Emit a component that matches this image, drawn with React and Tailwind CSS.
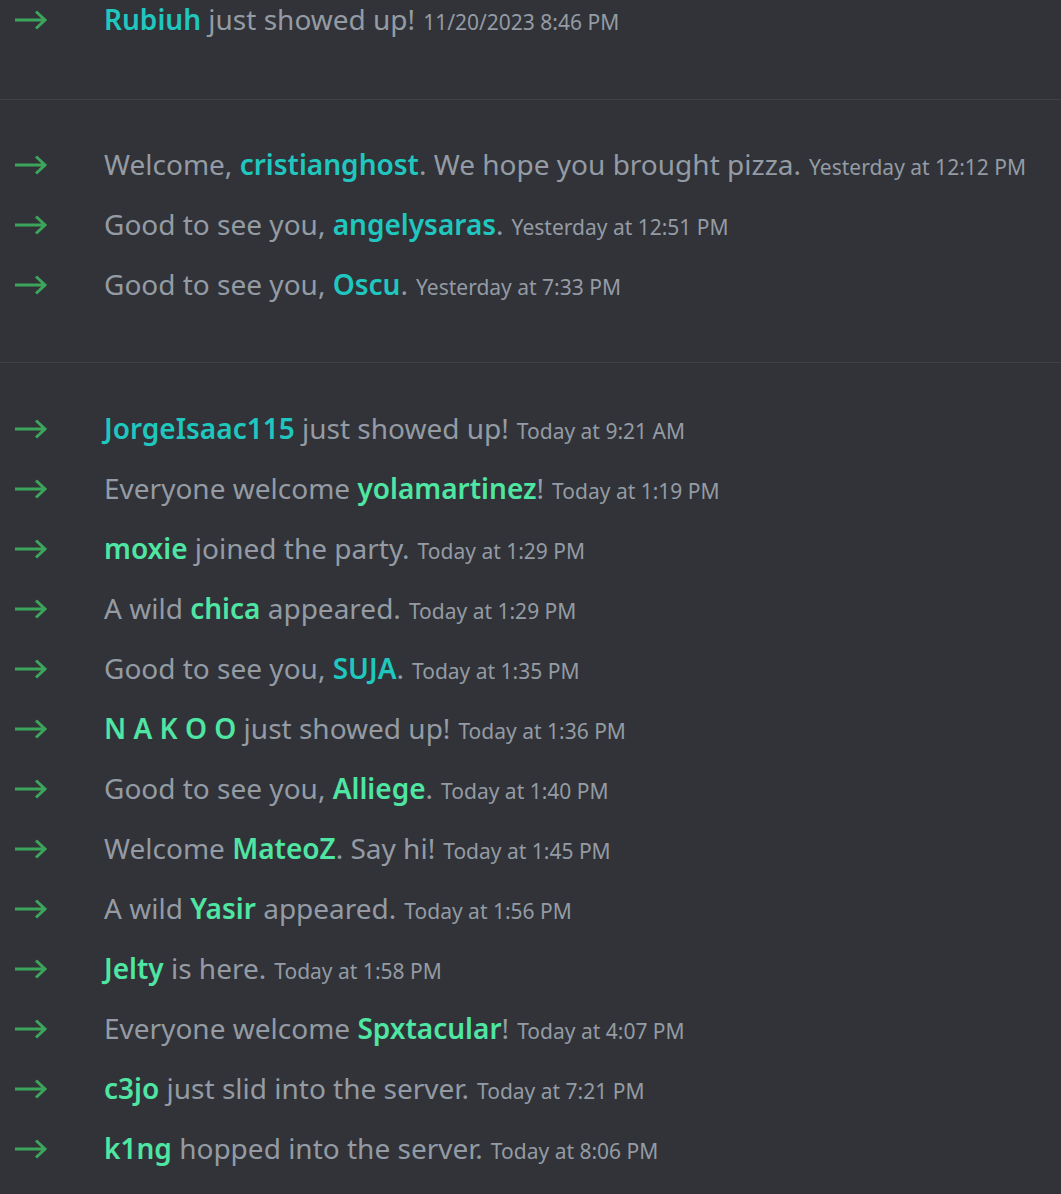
import React from "react";

const TEAL = "text-[#1fc7bf]";
const MINT = "text-[#4fe5a3]";

const Arrow = () => (
  <svg width="34" height="26" viewBox="0 0 34 26" className="shrink-0" fill="none">
    <path d="M1 13 H31 M22 4.5 L31 13 L22 21.5" stroke="#3ba55c" strokeWidth="3" strokeLinecap="butt" strokeLinejoin="miter" />
  </svg>
);

function Row({ before, name, after, time, color, tight }) {
  return (
    <div className={`flex items-center ${tight ? "h-[40px]" : "h-[60px]"}`}>
      <div className="w-[104px] pl-[14px] flex items-center shrink-0">
        <Arrow />
      </div>
      <div className="whitespace-nowrap text-[28px] leading-[36px] text-[#949ba4]">
        {before}
        <span className={`font-semibold ${color}`}>{name}</span>
        {after}
        <span className="ml-[8px] text-[21px] text-[#949ba4]">{time}</span>
      </div>
    </div>
  );
}

const g2 = [
  { before: "Welcome, ", name: "cristianghost", after: ". We hope you brought pizza.", time: "Yesterday at 12:12 PM", color: TEAL },
  { before: "Good to see you, ", name: "angelysaras", after: ".", time: "Yesterday at 12:51 PM", color: TEAL },
  { before: "Good to see you, ", name: "Oscu", after: ".", time: "Yesterday at 7:33 PM", color: TEAL },
];

const g3 = [
  { name: "JorgeIsaac115", after: " just showed up!", time: "Today at 9:21 AM", color: TEAL },
  { before: "Everyone welcome ", name: "yolamartinez", after: "!", time: "Today at 1:19 PM", color: MINT },
  { name: "moxie", after: " joined the party.", time: "Today at 1:29 PM", color: MINT },
  { before: "A wild ", name: "chica", after: " appeared.", time: "Today at 1:29 PM", color: MINT },
  { before: "Good to see you, ", name: "SUJA", after: ".", time: "Today at 1:35 PM", color: TEAL },
  { name: "N A K O O", after: " just showed up!", time: "Today at 1:36 PM", color: MINT },
  { before: "Good to see you, ", name: "Alliege", after: ".", time: "Today at 1:40 PM", color: MINT },
  { before: "Welcome ", name: "MateoZ", after: ". Say hi!", time: "Today at 1:45 PM", color: MINT },
  { before: "A wild ", name: "Yasir", after: " appeared.", time: "Today at 1:56 PM", color: MINT },
  { name: "Jelty", after: " is here.", time: "Today at 1:58 PM", color: MINT },
  { before: "Everyone welcome ", name: "Spxtacular", after: "!", time: "Today at 4:07 PM", color: MINT },
  { name: "c3jo", after: " just slid into the server.", time: "Today at 7:21 PM", color: MINT },
  { name: "k1ng", after: " hopped into the server.", time: "Today at 8:06 PM", color: MINT },
];

export default function App() {
  return (
    <div
      className="w-[1061px] h-[1194px] overflow-hidden bg-[#313338]"
      style={{ fontFamily: '"Noto Sans", "Open Sans", sans-serif' }}
    >
      <Row tight name="Rubiuh" after=" just showed up!" time="11/20/2023 8:46 PM" color={TEAL} />
      <div className="h-[59px]" />
      <div className="h-px bg-[#3f4147]" />
      <div className="pt-[35px] pb-[47px]">
        {g2.map((r, i) => <Row key={i} {...r} />)}
      </div>
      <div className="h-px bg-[#3f4147]" />
      <div className="pt-[36px]">
        {g3.map((r, i) => <Row key={i} {...r} />)}
      </div>
    </div>
  );
}
